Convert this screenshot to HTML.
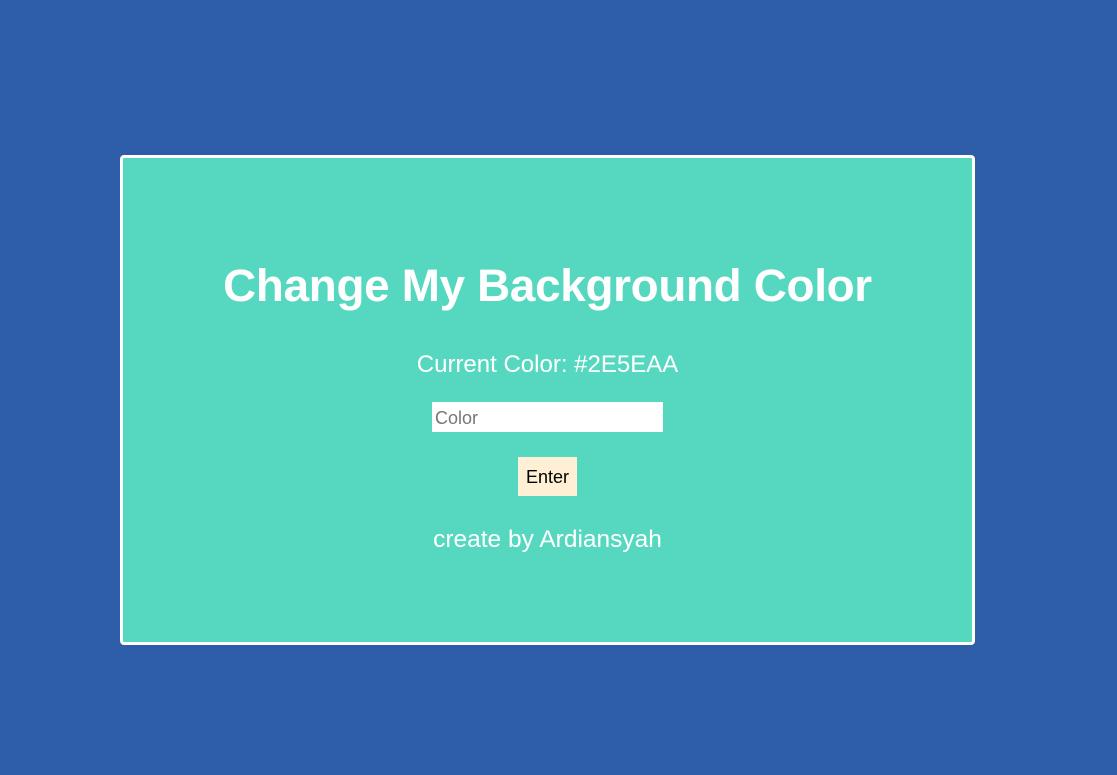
<!DOCTYPE html>
<html><head><style>
html,body{margin:0;width:1117px;height:775px;background:#2E5EAA;overflow:hidden;font-family:"Liberation Sans",sans-serif;color:#fff}
.card{position:absolute;left:120px;top:155px;width:849px;height:484px;border:3px solid #fff;border-radius:4px;background:#56D8C0}
.t{position:absolute;left:0;width:100%;text-align:center;white-space:nowrap}
h1{margin:0;font-size:45.8px;font-weight:bold;top:102px;letter-spacing:-0.3px}
.cur{top:193px;font-size:24px}
.in{position:absolute;left:309px;top:244px;width:231px;height:30px;background:#fff;color:#777;font-size:18px;line-height:32px;box-sizing:border-box;padding-left:3px}
.btn{position:absolute;left:395px;top:299px;width:59px;height:39px;background:#FEEFD5;color:#000;font-size:18px;line-height:41px;text-align:center}
.by{top:368px;font-size:24.5px}
</style></head><body>
<div class="card">
<h1 class="t">Change My Background Color</h1>
<div class="t cur">Current Color: #2E5EAA</div>
<div class="in">Color</div>
<div class="btn">Enter</div>
<div class="t by">create by Ardiansyah</div>
</div>
</body></html>
